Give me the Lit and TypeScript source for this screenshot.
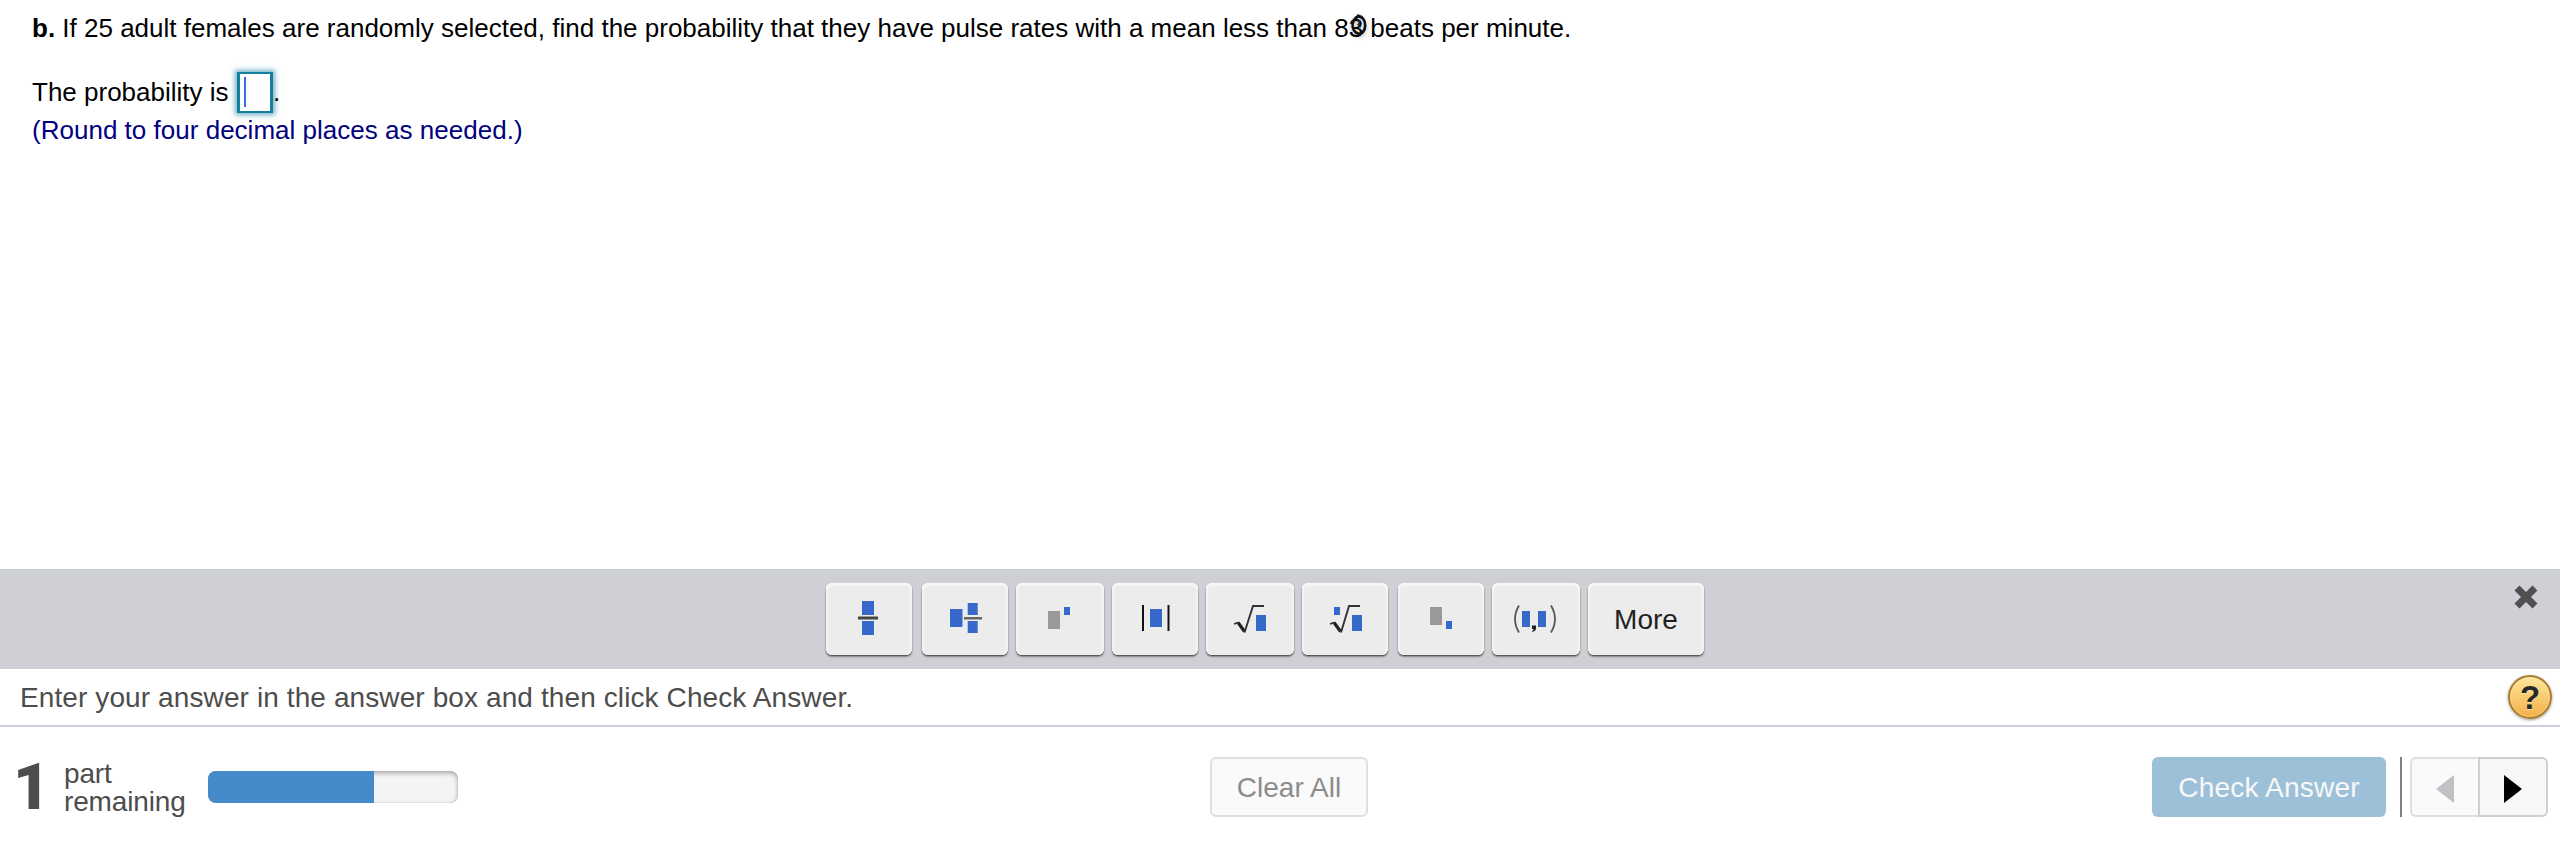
import { LitElement, html, svg, css } from "lit";
import { customElement, property } from "lit/decorators.js";

const BLUE = "#3769cb";
const GREY = "#999999";

const box = (x: number, y: number, w: number, h: number, fill = BLUE) =>
  svg`<rect x=${x} y=${y} width=${w} height=${h} fill=${fill}></rect>`;

/* Key widths, gaps and glyphs; every glyph is drawn in the key's own 72px-high box. */
const KEYS = [
  { name: "Fraction", w: 86, gap: 0, art: svg`${box(36, 18, 12, 14)}${box(32, 33.5, 20, 3, "#444")}${box(36, 38, 12, 14)}` },
  { name: "Mixed number", w: 86, gap: 10, art: svg`${box(28, 26, 12.5, 18)}${box(45.7, 20, 10, 12)}${box(42, 34, 18, 2.5, "#666")}${box(45.7, 38, 10, 12)}` },
  { name: "Exponent", w: 88, gap: 8, art: svg`${box(32, 28, 12, 18, GREY)}${box(48, 24, 6, 8)}` },
  { name: "Absolute value", w: 86, gap: 8, art: svg`${box(30, 22, 2, 26, "#111")}${box(38, 26, 12, 18)}${box(55.5, 22, 2, 26, "#111")}` },
  { name: "Square root", w: 88, gap: 8, art: svg`<path d="M28 41l4-1.500" stroke="#333" stroke-width="1.800" fill="none"/><path d="M32 39.500l6.500 9" stroke="#222" stroke-width="3.200" fill="none"/><path d="M38.500 49.500L47 23h11" stroke="#333" stroke-width="1.900" fill="none"/>${box(50, 32, 10, 16)}` },
  { name: "Nth root", w: 86, gap: 8, art: svg`${box(32, 24, 6, 8)}<path d="M28 41l4-1.500" stroke="#333" stroke-width="1.800" fill="none"/><path d="M32 39.500l6.500 9" stroke="#222" stroke-width="3.200" fill="none"/><path d="M39 49.500L47 23h11" stroke="#333" stroke-width="1.900" fill="none"/>${box(50, 32, 10, 16)}` },
  { name: "Subscript", w: 86, gap: 10, art: svg`${box(32, 24, 12, 18, GREY)}${box(48, 38, 6, 8)}` },
  { name: "Ordered pair", w: 88, gap: 8, art: svg`<path d="M27 22.500q-8 13.500 0 27M59 22.500q8 13.500 0 27" stroke="#555" stroke-width="1.800" fill="none"/>${box(30, 28, 8, 16)}${box(46, 28, 8, 16)}<path d="M40 42.500h4v3q0 2-3.500 3.500l-.5-1q1.500-.7 1.600-2h-1.600z" fill="#222"/>` },
];

@customElement("math-palette")
export class MathPalette extends LitElement {
  static styles = css`
    :host { display: flex; justify-content: space-between; align-items: flex-start; box-sizing: border-box;
      height: 100px; padding: 13px 31px 0 826px; background: #cfcfd6; border-top: 1px solid #c9cdda; }
    .keys { display: flex; }
    .key { height: 72px; box-sizing: border-box; padding: 0; border: 0; border-radius: 6px; background: #ececec;
      box-shadow: 0 1px 1px #555, 0 2px 2px rgba(0,0,0,.35), inset 0 3px 1px #f7f7f7, inset 2px 0 1px #f3f3f3, inset -2px 0 1px #f3f3f3; }
    .key svg { display: block; }
    .more { width: 116px; margin-left: 8px; font: 28px/74px "Liberation Sans", Arial, sans-serif; color: #222; text-align: center; }
    .close { display: block; margin-top: 2px; margin-right: -9px; }
  `;
  render() {
    return html`
      <div class="keys">
        ${KEYS.map((k) => html`<button class="key" aria-label=${k.name} style="width:${k.w}px;margin-left:${k.gap}px">
          <svg width=${k.w} height="72">${k.art}</svg></button>`)}
        <button class="key more">More</button>
      </div>
      <svg class="close" width="24" height="24" viewBox="0 0 24 24"><path d="M3 3l18 18M21 3l-18 18" stroke="#505050" stroke-width="7"/></svg>
    `;
  }
}

@customElement("part-progress")
export class PartProgress extends LitElement {
  @property({ type: Number }) percent = 0;
  static styles = css`
    :host { display: block; width: 250px; height: 32px; }
    .track { height: 32px; border-radius: 8px; overflow: hidden; background: #f4f4f4;
      box-shadow: inset 0 2px 5px rgba(0,0,0,.32), inset 0 0 1px rgba(0,0,0,.3); }
    .fill { height: 32px; background: #468bc9; }
  `;
  render() {
    return html`<div class="track"><div class="fill" style="width:${this.percent}%"></div></div>`;
  }
}

@customElement("app-root")
export class AppRoot extends LitElement {
  static styles = css`
    :host { display: flex; flex-direction: column; width: 2560px; height: 849px; overflow: hidden; background: #fff;
      font-family: "Liberation Sans", Arial, sans-serif; font-size: 28px; color: #4d4d4d; }
    .question { height: 569px; box-sizing: border-box; padding: 13px 0 0 32px; font-size: 26px; line-height: 30px; color: #000; white-space: nowrap; }
    .prompt { height: 30px; }
    .mark { position: relative; display: inline-block; }
    .scribble { position: absolute; left: 0; top: 0; overflow: visible; filter: drop-shadow(0 2px 2px rgba(0,0,0,.3)); }
    .answer { display: flex; height: 41px; margin-top: 29px; align-items: flex-start; }
    .label { padding-top: 5px; width: 205px; }
    .input { box-sizing: border-box; width: 36px; height: 41px; padding: 3px 0 0 4px; border: 2px solid #157f9f; border-width: 2px 3px; box-shadow: 0 0 5px 2px rgba(21,127,159,.6); }
    .caret { width: 2px; height: 30px; background: #3b6fd8; }
    .dot { padding: 5px 0 0 0; }
    .hint { color: #000080; margin-top: 2px; letter-spacing: .015px; }
    .status { display: flex; justify-content: space-between; height: 58px; box-sizing: border-box; padding: 4px 8px 0 20px; border-bottom: 2px solid #cccfdc; line-height: 32px; }
    .message { padding-top: 9px; letter-spacing: .105px; }
    .help { box-sizing: border-box; width: 44px; height: 44px; margin-top: 2px; border: 2px solid #a97d2b; border-radius: 50%;
      background: linear-gradient(#fde79b, #f2b04a); box-shadow: 0 1px 3px rgba(0,0,0,.4), inset 0 0 2px #fff0b8;
      color: #282828; font-weight: bold; font-size: 33px; line-height: 41px; text-align: center; text-shadow: 0 1px 0 #fbe3a0; }
    .footer { display: flex; height: 122px; align-items: flex-start; box-sizing: border-box; padding-top: 30px; }
    .count { width: 50px; padding-left: 13px; font: 900 64px/62px Roboto, sans-serif; box-sizing: border-box; }
    .parts { width: 144px; padding: 3px 0 0 14px; box-sizing: border-box; line-height: 28px; letter-spacing: -.15px; }
    .bar { margin: 14px 752px 0 14px; }
    .btn { box-sizing: border-box; height: 60px; border-radius: 6px; line-height: 62px; text-align: center; }
    .clear { width: 158px; border: 2px solid #dfdfdf; background: #fafafa; color: #8c8c8c; line-height: 58px; }
    .check { width: 234px; margin-left: 784px; background: #9dc0d9; color: #f8f8f8; letter-spacing: .2px; }
    .rule { width: 2px; height: 60px; margin: 0 8px 0 14px; background: #808080; }
    .nav { box-sizing: border-box; width: 68px; height: 60px; border: 2px solid #dfdfdf; border-right: 0; border-radius: 6px 0 0 6px; background: #fafafa; }
    .next { width: 70px; border: 2px solid #cfcfcf; border-radius: 0 6px 6px 0; background: #f7f7f7; }
    .nav svg { display: block; margin: 16px 0 0 24px; }
  `;
  render() {
    return html`
      <div class="question">
        <div class="prompt"><b>b.</b> If 25 adult females are randomly selected, find the probability that they have pulse rates with a mean less than 8<span class="mark">3<svg class="scribble" width="20" height="30" viewBox="0 0 20 30"><path d="M7 4.500C3.500 8 2.500 13 5 17.500c2 3 6 4.500 8.500 2C17 16 17 9 14 5.500 12 3 9.500 2.500 7 5M9 2.500l4 2.500" fill="none" stroke="#101010" stroke-width="2.600" stroke-linecap="round"/><path d="M8 7c3 0 3 3 1 4.500l2.500 3" fill="none" stroke="#222" stroke-width="1.300"/></svg></span> beats per minute.</div>
        <div class="answer"><div class="label">The probability is</div><div class="input"><div class="caret"></div></div><div class="dot">.</div></div>
        <div class="hint">(Round to four decimal places as needed.)</div>
      </div>
      <math-palette></math-palette>
      <div class="status"><div class="message">Enter your answer in the answer box and then click Check Answer.</div><div class="help">?</div></div>
      <div class="footer">
        <div class="count">1</div>
        <div class="parts">part<br>remaining</div>
        <part-progress class="bar" percent="66.400"></part-progress>
        <div class="btn clear">Clear All</div>
        <div class="btn check">Check Answer</div>
        <div class="rule"></div>
        <div class="nav"><svg width="18" height="28"><path d="M18 0v28L0 14z" fill="#c0c1c5"/></svg></div>
        <div class="nav next"><svg width="18" height="28"><path d="M0 0v28l18-14z" fill="#000"/></svg></div>
      </div>
    `;
  }
}
